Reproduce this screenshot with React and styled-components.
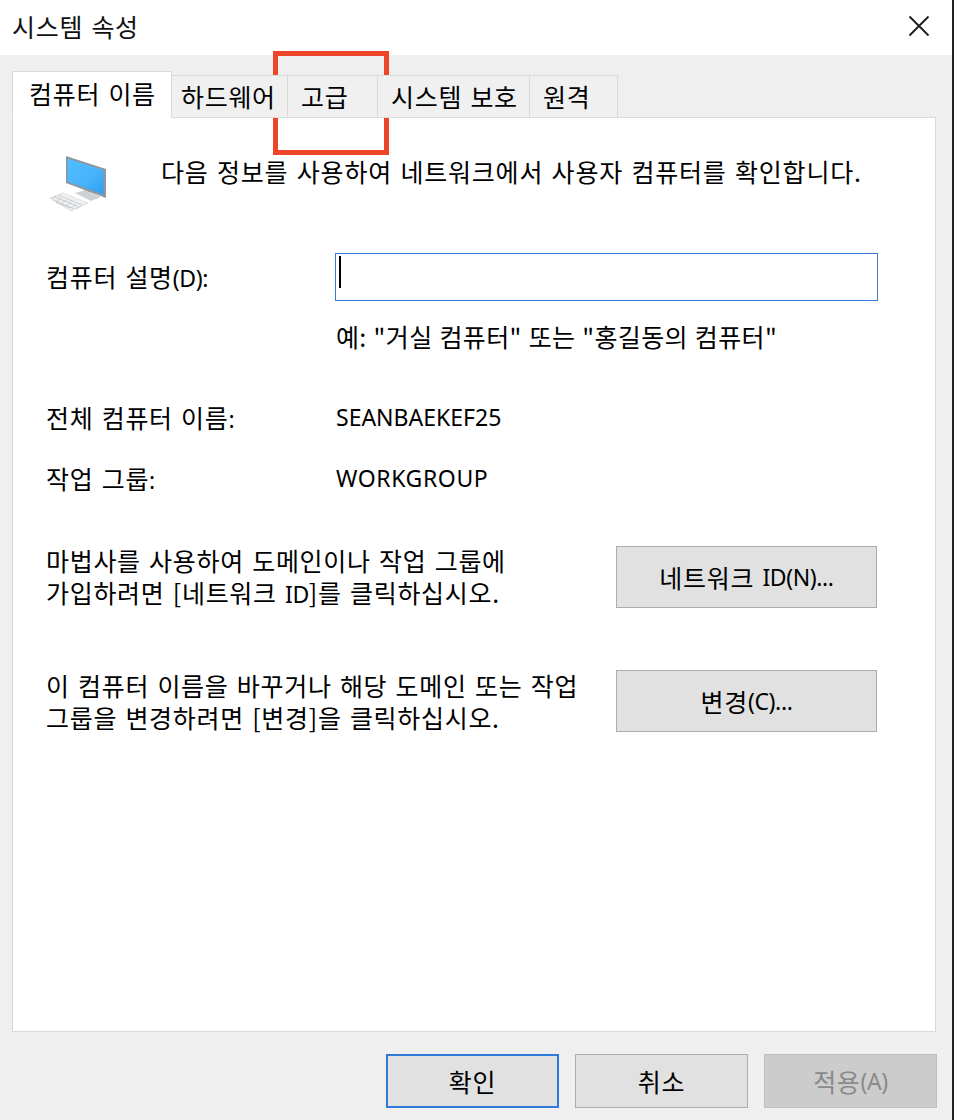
import styled, { createGlobalStyle } from "styled-components"

const GlobalStyle = createGlobalStyle`
  html, body {
    margin: 0;
    padding: 0;
    background: #FFFFFF;
  }
  body {
    font-family: "Noto Sans CJK KR", "Noto Sans", sans-serif;
    color: #000000;
  }
`

const tabs = [
  { label: "컴퓨터 이름", width: 160, pad: 16, active: true },
  { label: "하드웨어", width: 116, pad: 9 },
  { label: "고급", width: 90, pad: 13 },
  { label: "시스템 보호", width: 152, pad: 13 },
  { label: "원격", width: 88, pad: 13 }
]

function ComputerIcon() {
  return (
    <svg width="62" height="58" viewBox="0 0 62 58">
      <defs>
        <linearGradient id="screen" x1="0" y1="0" x2="1" y2="1">
          <stop offset="0" stopColor="#52BDFF" />
          <stop offset="0.6" stopColor="#46B2FB" />
          <stop offset="1" stopColor="#2F9DF0" />
        </linearGradient>
      </defs>
      <polygon points="36,33 42,35 42,40 36,38" fill="#C2C8CC" />
      <polygon points="27,38 38,35 53,42 43,46" fill="#CDD2D5" />
      <polygon points="18,1 58,14 58,43 18,28" fill="#8E979E" />
      <polygon points="19.5,3.5 55.5,15 55.5,39.5 19.5,26.5" fill="url(#screen)" />
      <polygon points="2,43 15,38 40,48 23,56" fill="#EEF0F1" stroke="#C4C8CB" strokeWidth="0.5" />
      <path d="M6 41.5 L30 51.5 M10 40 L34 50 M5 45 L26 54 M8 47.5 L22 52.8 M8 41 L4 44 M13 43 L8 47 M18 45 L13 49 M23 47 L18 51 M28 49 L23 53 M33 51 L28 54" stroke="#B5BABD" strokeWidth="0.6" fill="none" />
    </svg>
  )
}

export default function App() {
  return (
    <Window>
      <GlobalStyle />
      <TitleBar>
        <Title>시스템 속성</Title>
        <CloseIcon width="22" height="22" viewBox="0 0 22 22">
          <path d="M1.5 1.5 L20.5 20.5 M20.5 1.5 L1.5 20.5" stroke="#1A1A1A" strokeWidth="1.8" fill="none" />
        </CloseIcon>
      </TitleBar>
      <Body>
        <TabBar>
          {tabs.map((t) => (
            <Tab key={t.label} $active={t.active} $width={t.width} $pad={t.pad}>{t.label}</Tab>
          ))}
        </TabBar>
        <Panel>
          <Intro>
            <ComputerIcon />
            <span>다음 정보를 사용하여 네트워크에서 사용자 컴퓨터를 확인합니다.</span>
          </Intro>
          <FieldRow>
            <span>컴퓨터 설명<Latin>(D):</Latin></span>
            <TextBox><Caret /></TextBox>
          </FieldRow>
          <Hint>예: "거실 컴퓨터" 또는 "홍길동의 컴퓨터"</Hint>
          <InfoRow $top={49}>
            <span>전체 컴퓨터 이름<Latin>:</Latin></span>
            <Value>SEANBAEKEF25</Value>
          </InfoRow>
          <InfoRow $top={27}>
            <span>작업 그룹<Latin>:</Latin></span>
            <Value $spacing={0.6}>WORKGROUP</Value>
          </InfoRow>
          <ActionRow $top={50}>
            <p>마법사를 사용하여 도메인이나 작업 그룹에<br />가입하려면 [네트워크 <Latin>ID</Latin>]를 클릭하십시오.</p>
            <ActionButton>네트워크 <Latin>ID(N)...</Latin></ActionButton>
          </ActionRow>
          <ActionRow $top={62}>
            <p>이 컴퓨터 이름을 바꾸거나 해당 도메인 또는 작업<br />그룹을 변경하려면 [변경]을 클릭하십시오.</p>
            <ActionButton>변경<Latin>(C)...</Latin></ActionButton>
          </ActionRow>
        </Panel>
        <Footer>
          <FooterButton $focused>확인</FooterButton>
          <FooterButton>취소</FooterButton>
          <FooterButton $disabled>적용<Latin>(A)</Latin></FooterButton>
        </Footer>
      </Body>
      <Callout />
    </Window>
  )
}

const Window = styled.div`
  position: relative;
  width: 954px;
  height: 1120px;
  box-sizing: border-box;
  overflow: hidden;
  display: flex;
  flex-direction: column;
  font-size: 25px;
  line-height: 32px;
  letter-spacing: 0.7px;
  word-spacing: 2px;
  border-right: 2px solid #222222;
`
const Latin = styled.span`
  font-family: "Noto Sans", sans-serif;
  font-size: 23px;
  letter-spacing: -0.4px;
`
const TitleBar = styled.div`
  height: 55px;
  flex-shrink: 0;
  box-sizing: border-box;
  display: flex;
  align-items: center;
  justify-content: space-between;
  padding: 0 22px 4px 12px;
  background-color: #FFFFFF;
`
const Title = styled.h1`
  margin: 0;
  font-size: inherit;
  font-weight: 400;
  color: #111111;
`
const CloseIcon = styled.svg`
  display: block;
`
const Body = styled.div`
  flex: 1;
  display: flex;
  flex-direction: column;
  padding: 16px 16px 12px 12px;
  box-sizing: border-box;
  background-color: #EFEFEF;
`
const TabBar = styled.div`
  display: flex;
  align-items: flex-end;
  height: 47px;
  margin-bottom: -1px;
  position: relative;
  z-index: 1;
`
const Tab = styled.div`
  width: ${(p) => p.$width}px;
  height: ${(p) => (p.$active ? 47 : 43)}px;
  box-sizing: border-box;
  padding-left: ${(p) => p.$pad}px;
  padding-bottom: ${(p) => (p.$active ? 4 : 2)}px;
  display: flex;
  align-items: center;
  white-space: nowrap;
  background-color: ${(p) => (p.$active ? "#FFFFFF" : "#F0F0F0")};
  border: 1px solid #D9D9D9;
  border-left-width: ${(p) => (p.$active ? 1 : 0)}px;
  border-bottom-color: ${(p) => (p.$active ? "#FFFFFF" : "#D9D9D9")};
`
const Panel = styled.div`
  height: 915px;
  box-sizing: border-box;
  padding: 37px 58px 0 33px;
  background-color: #FFFFFF;
  border: 1px solid #D9D9D9;
`
const Intro = styled.div`
  display: flex;
  align-items: flex-start;
  gap: 51px;
  height: 54px;
  margin-left: 2px;
  letter-spacing: 0.8px;
`
const FieldRow = styled.div`
  display: grid;
  grid-template-columns: 289px 543px;
  align-items: center;
  margin-top: 44px;
`
const TextBox = styled.div`
  height: 48px;
  box-sizing: border-box;
  border: 1.5px solid #3A7BD0;
  padding: 1.5px 2.5px;
  background-color: #FFFFFF;
`
const Caret = styled.div`
  width: 2px;
  height: 32px;
  background-color: #000000;
`
const Hint = styled.p`
  margin: 19px 0 0 290px;
  letter-spacing: 0.35px;
  word-spacing: 1px;
`
const InfoRow = styled.div`
  display: grid;
  grid-template-columns: 290px 1fr;
  margin-top: ${(p) => p.$top}px;
`
const Value = styled.span`
  font-family: "Noto Sans", sans-serif;
  font-size: 23px;
  letter-spacing: ${(p) => p.$spacing || 0}px;
`
const ActionRow = styled.div`
  display: flex;
  justify-content: space-between;
  align-items: center;
  height: 62px;
  margin-top: ${(p) => p.$top}px;
  p {
    margin: 0;
  }
`
const ActionButton = styled.div`
  width: 261px;
  height: 62px;
  box-sizing: border-box;
  display: flex;
  align-items: center;
  justify-content: center;
  white-space: pre;
  background-color: #E1E1E1;
  border: 1px solid #ADADAD;
`
const Footer = styled.div`
  display: flex;
  justify-content: flex-end;
  gap: 16px;
  margin-top: 22px;
  margin-right: -1px;
`
const FooterButton = styled.div`
  width: 173px;
  height: 54px;
  box-sizing: border-box;
  display: flex;
  align-items: center;
  justify-content: center;
  background-color: ${(p) => (p.$disabled ? "#CCCCCC" : "#E1E1E1")};
  color: ${(p) => (p.$disabled ? "#8A8A8A" : "#000000")};
  border: ${(p) => (p.$focused ? "2px solid #2F79D8" : p.$disabled ? "1px solid #BFBFBF" : "1px solid #ADADAD")};
`
const Callout = styled.div`
  position: absolute;
  left: 273px;
  top: 51px;
  width: 116px;
  height: 104px;
  box-sizing: border-box;
  border: 5px solid #EE4528;
`
